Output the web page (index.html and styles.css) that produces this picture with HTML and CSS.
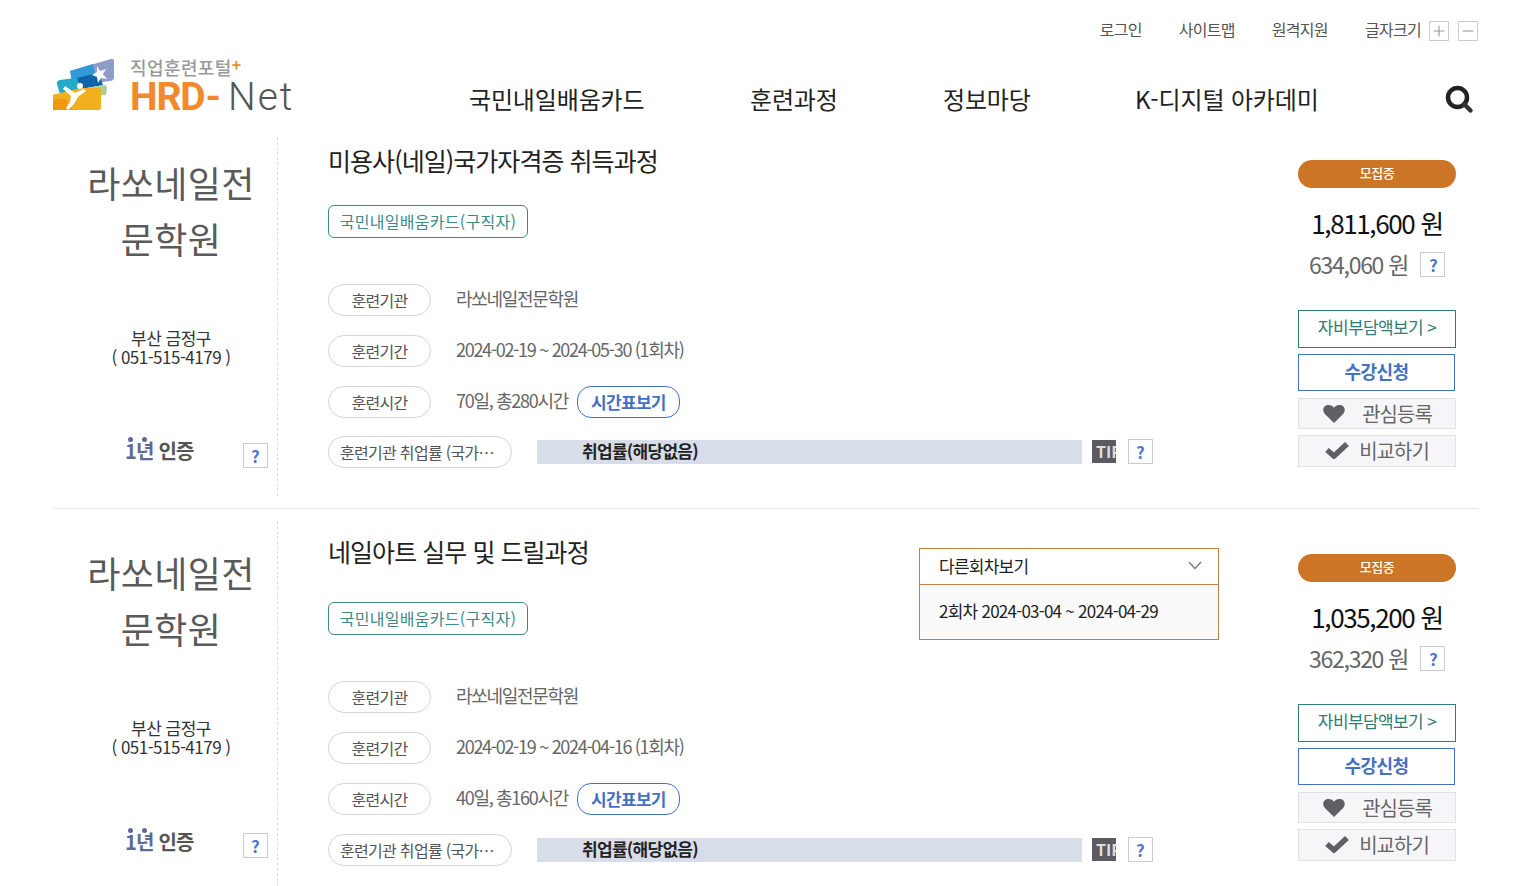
FILE: index.html
```html
<!DOCTYPE html>
<html lang="ko">
<head>
<meta charset="utf-8">
<title>HRD-Net</title>
<link rel="stylesheet" href="styles.css">
</head>
<body>
<div class="page">
  <header class="header">
    <nav class="util">
      <a>로그인</a><a>사이트맵</a><a>원격지원</a>
      <span class="fontsize">글자크기<svg class="sz" width="20" height="20" viewBox="0 0 20 20"><path d="M4 10 H16 M10 4 V16" stroke="#999" stroke-width="1.200" fill="none"/></svg><svg class="sz" width="20" height="20" viewBox="0 0 20 20"><path d="M4 10 H16" stroke="#999" stroke-width="1.200" fill="none"/></svg></span>
    </nav>
    <div class="mainbar">
      <div class="logo">
        <svg class="logo-mark" width="64" height="56" viewBox="0 0 64 56">
          <path d="M19 13 L60 1 Q63 0 63 4 L63 19 Q63 23 59 23 L22 28 Z" fill="#8f9bc9"/>
          <path d="M19 13 L42 6 L46 26 L22 28 Z" fill="#2f9ad6"/>
          <path d="M26 20 L47 15 L52 27 L30 31 Z" fill="#0f63ab"/>
          <path d="M6 26 Q5 23 9 22 L24 20 L32 31 L9 36 Z" fill="#24a9c9"/>
          <path d="M36 30 L53 27 Q56 27 56 30 L55 37 L38 38 Z" fill="#a9cf9e"/>
          <path d="M2 39 Q1 36 5 36 L30 30 L48 30 Q50 30 50 33 L50 50 Q50 52 48 52 L5 52 Q2 52 2 50 Z" fill="#f2b01e"/>
          <path d="M22 52 L2 52 L2 42 L14 40 Z" fill="#ef9a12"/>
          <path d="M46 8 L49 13 L55 11 L52 16 L56 21 L50 20 L47 25 L46 19 L41 17 L46 14 Z" fill="#fff"/>
          <path d="M14 28 L24 35 L33 31 L35 33 L27 39 L23 46 L17 52 L15 50 L19 44 L20 38 L12 31 Z" fill="#fff"/>
          <circle cx="29" cy="28" r="3" fill="#fff"/>
        </svg>
        <div class="logo-text">
          <div class="logo-sub">직업훈련포털<b>+</b></div>
          <div class="logo-name"><span class="hrd">HRD</span><span class="dash">-</span><span class="net">Net</span></div>
        </div>
      </div>
      <nav class="gnb">
        <a class="g1">국민내일배움카드</a><a class="g2">훈련과정</a><a class="g3">정보마당</a><a class="g4">K-디지털 아카데미</a>
      </nav>
      <svg class="search" width="30" height="30" viewBox="0 0 30 30">
        <circle cx="13.5" cy="13.5" r="9.5" fill="none" stroke="#222" stroke-width="4.500"/>
        <path d="M20 20 L26.5 26.5" stroke="#333" stroke-width="4.500" stroke-linecap="round"/>
      </svg>
    </div>
  </header>

  <section class="row row-a">
    <div class="col-left">
      <h2 class="org">라쏘네일전<br>문학원</h2>
      <p class="addr">부산 금정구<br>( 051-515-4179 )</p>
      <div class="cert"><span class="cert-txt"><em>1년</em> 인증</span><span class="q">?</span></div>
    </div>
    <div class="col-mid">
      <h3 class="title">미용사(네일)국가자격증 취득과정</h3>
      <div class="tag-line"><span class="tag">국민내일배움카드(구직자)</span></div>
      <ul class="info">
        <li><span class="pill">훈련기관</span><span class="val">라쏘네일전문학원</span></li>
        <li><span class="pill">훈련기간</span><span class="val">2024-02-19 ~ 2024-05-30 (1회차)</span></li>
        <li><span class="pill">훈련시간</span><span class="val">70일, 총280시간</span><span class="timebtn">시간표보기</span></li>
        <li class="rate-li"><span class="pill pill-wide">훈련기관 취업률 (국가…</span><span class="rate"><b>취업률(해당없음)</b></span><span class="tip">TIP</span><span class="q">?</span></li>
      </ul>
    </div>
    <div class="col-right">
      <div class="status">모집중</div>
      <div class="price">1,811,600 원</div>
      <div class="subprice"><span>634,060 원</span><span class="q">?</span></div>
      <a class="btn btn-green">자비부담액보기 &gt;</a>
      <a class="btn btn-blue">수강신청</a>
      <a class="btn btn-gray"><svg class="ico-h" width="24" height="20" viewBox="0 0 26 22"><path d="M13 21 L3 11 C-1 6 2 1 7 1 C10 1 12 2.500 13 4 C14 2.500 16 1 19 1 C24 1 27 6 23 11 Z" fill="#5f5f66"/></svg>관심등록</a>
      <a class="btn btn-gray btn-cmp"><svg class="ico-c" width="24" height="18" viewBox="0 0 24 18"><path d="M2 9 L9 15 L22 3" fill="none" stroke="#5f5f66" stroke-width="5.500"/></svg>비교하기</a>
    </div>
  </section>

  <div class="divider"></div>

  <section class="row row-b">
    <div class="col-left">
      <h2 class="org">라쏘네일전<br>문학원</h2>
      <p class="addr">부산 금정구<br>( 051-515-4179 )</p>
      <div class="cert"><span class="cert-txt"><em>1년</em> 인증</span><span class="q">?</span></div>
    </div>
    <div class="col-mid">
      <h3 class="title">네일아트 실무 및 드릴과정</h3>
      <div class="tag-line"><span class="tag">국민내일배움카드(구직자)</span></div>
      <ul class="info">
        <li><span class="pill">훈련기관</span><span class="val">라쏘네일전문학원</span></li>
        <li><span class="pill">훈련기간</span><span class="val">2024-02-19 ~ 2024-04-16 (1회차)</span></li>
        <li><span class="pill">훈련시간</span><span class="val">40일, 총160시간</span><span class="timebtn">시간표보기</span></li>
        <li class="rate-li"><span class="pill pill-wide">훈련기관 취업률 (국가…</span><span class="rate"><b>취업률(해당없음)</b></span><span class="tip">TIP</span><span class="q">?</span></li>
      </ul>
      <div class="dropdown">
        <div class="dd-head">다른회차보기<svg width="14" height="9" viewBox="0 0 14 9"><path d="M1 1 L7 7.500 L13 1" fill="none" stroke="#777" stroke-width="1.300"/></svg></div>
        <div class="dd-item">2회차 2024-03-04 ~ 2024-04-29</div>
      </div>
    </div>
    <div class="col-right">
      <div class="status">모집중</div>
      <div class="price">1,035,200 원</div>
      <div class="subprice"><span>362,320 원</span><span class="q">?</span></div>
      <a class="btn btn-green">자비부담액보기 &gt;</a>
      <a class="btn btn-blue">수강신청</a>
      <a class="btn btn-gray"><svg class="ico-h" width="24" height="20" viewBox="0 0 26 22"><path d="M13 21 L3 11 C-1 6 2 1 7 1 C10 1 12 2.500 13 4 C14 2.500 16 1 19 1 C24 1 27 6 23 11 Z" fill="#5f5f66"/></svg>관심등록</a>
      <a class="btn btn-gray btn-cmp"><svg class="ico-c" width="24" height="18" viewBox="0 0 24 18"><path d="M2 9 L9 15 L22 3" fill="none" stroke="#5f5f66" stroke-width="5.500"/></svg>비교하기</a>
    </div>
  </section>
</div>
</body>
</html>
```
FILE: styles.css
```css
* { box-sizing: border-box; }
html, body { margin: 0; padding: 0; background: #fff; }
body { height: 886px; overflow: hidden; font-family: "Noto Sans CJK KR", "Noto Sans", sans-serif; color: #222; }
ul { list-style: none; margin: 0; padding: 0; }
h2, h3, p { margin: 0; font-weight: 400; }
.page { width: 1425px; margin-left: 53px; }

.header { height: 137px; }
.util { height: 52px; display: flex; justify-content: flex-end; align-items: flex-start; padding-top: 18px; font-size: 16px; letter-spacing: -0.7px; color: #555; line-height: 22px; }
.util a { margin-right: 37px; }
.fontsize { display: flex; align-items: flex-start; }
.sz { flex: none; margin: 3px 0 0 8px; border: 1px solid #ccc; }
.sz + .sz { margin-left: 9px; }
.mainbar { display: flex; align-items: flex-start; position: relative; }
.logo { width: 416px; display: flex; align-items: flex-start; }
.logo-mark { margin: 6px 0 0 -2px; flex: none; }
.logo-text { margin-left: 15px; }
.logo-sub { font-size: 18px; line-height: 20px; font-weight: 500; color: #999; letter-spacing: 0.4px; margin-top: 2px; white-space: nowrap; }
.logo-sub b { color: #f08a24; vertical-align: 4px; font-size: 16px; }
.logo-name { font-family: Roboto, "Liberation Sans", sans-serif; font-size: 39px; line-height: 36px; margin-top: 2px; white-space: nowrap; display: flex; }
.hrd { color: #f08a2c; font-weight: 700; letter-spacing: -1.1px; }
.dash { color: #f08a2c; margin: 0 7px 0 1px; font-weight: 700; }
.net { color: #555; font-weight: 300; letter-spacing: 2px; }
.gnb { display: flex; font-size: 24px; line-height: 36px; letter-spacing: -0.15px; color: #222; padding-top: 29px; white-space: nowrap; }
.g1 { width: 281px; }
.g2 { width: 193px; }
.g3 { width: 192px; }
.search { position: absolute; left: 1391px; top: 32px; }

.row { display: flex; height: 359px; }
.col-left { width: 225px; border-right: 1px dashed #ddd; text-align: center; padding-left: 12px; position: relative; }
.org { font-size: 36px; line-height: 56px; color: #5a5a5a; padding-top: 17px; letter-spacing: 0.4px; font-weight: 400; }
.addr { font-size: 17px; line-height: 19px; color: #333; margin-top: 62px; letter-spacing: -0.5px; }
.cert { position: absolute; left: 0; right: 0; top: 296px; }
.cert-txt { position: absolute; left: 72px; top: 3px; font-size: 20px; line-height: 30px; font-weight: 700; color: #555; letter-spacing: -0.8px; }
.cert-txt em { font-style: normal; color: #5f6a94; }
.cert-txt::before { content: ""; position: absolute; left: 3px; top: 1px; width: 5px; height: 5px; border-radius: 50%; background: #5f6a94; box-shadow: 14px 0 0 #5f6a94; }
.cert .q { position: absolute; left: 190px; top: 10px; }
.q { display: inline-block; flex: none; width: 25px; height: 25px; border: 1px solid #ccc; color: #4d76cf; font-size: 17px; font-weight: 700; line-height: 23px; text-align: center; }

.col-mid { width: 994px; padding-left: 50px; position: relative; }
.title { font-size: 25px; line-height: 36px; color: #222; letter-spacing: -0.95px; padding-top: 5px; }
.tag-line { margin-top: 27px; }
.tag { display: inline-block; width: 200px; height: 33px; border: 1px solid #3d8a86; border-radius: 6px; color: #3d8a86; font-size: 16px; line-height: 30px; text-align: center; letter-spacing: 0.3px; white-space: nowrap; }
.info { margin-top: 45px; }
.info li { display: flex; align-items: center; height: 33px; margin-bottom: 18px; }
.info li.rate-li { margin-top: -1px; }
.pill { display: block; width: 103px; height: 32px; border: 1px solid #d5d5d5; border-radius: 16px; color: #555; font-size: 16px; line-height: 30px; text-align: center; letter-spacing: -0.7px; flex: none; }
.pill-wide { width: 184px; white-space: nowrap; text-align: left; padding-left: 11px; }
.val { margin-left: 25px; font-size: 18px; letter-spacing: -1.3px; color: #666; line-height: 30px; padding-bottom: 4px; }
.timebtn { margin-left: 9px; width: 103px; height: 32px; border: 1px solid #4470c4; border-radius: 14px; color: #4470c4; font-weight: 700; font-size: 17px; line-height: 29px; text-align: center; letter-spacing: -0.7px; }
.rate-li .rate { margin-left: 25px; width: 545px; height: 24px; background: #d8dee9; font-size: 17px; line-height: 22px; padding-left: 45px; letter-spacing: -0.7px; color: #222; }
.rate b { font-weight: 700; }
.tip { margin-left: 10px; width: 24px; height: 23px; background: #5a5a60; color: #ddd; font-size: 16px; font-weight: 700; line-height: 23px; overflow: hidden; padding-left: 4px; letter-spacing: 0; white-space: nowrap; }
.rate-li .q { margin-left: 12px; }

.dropdown { position: absolute; left: 641px; top: 27px; width: 300px; border: 1px solid #bd8244; font-size: 17px; letter-spacing: -0.75px; }
.dd-head { height: 36px; padding: 0 16px 2px 19px; border-bottom: 1px solid #bd8244; display: flex; justify-content: space-between; align-items: center; color: #222; background: #fff; }
.dd-item { height: 54px; padding-left: 19px; line-height: 52px; background: #fafafb; color: #222; }

.col-right { width: 206px; display: flex; flex-direction: column; padding-left: 26px; }
.status { width: 158px; height: 28px; background: #cc7526; color: #fff; border-radius: 14px; font-size: 13px; font-weight: 500; text-align: center; line-height: 26px; margin-top: 23px; letter-spacing: -0.5px; }
.price { width: 158px; text-align: center; font-size: 26px; line-height: 36px; color: #111; margin-top: 17px; letter-spacing: -1.4px; white-space: nowrap; }
.subprice { display: flex; align-items: center; width: 158px; font-size: 23px; line-height: 36px; color: #666; margin-top: 5px; padding-left: 11px; letter-spacing: -1.27px; white-space: nowrap; }
.subprice .q { margin-left: 12px; }
.btn { display: flex; align-items: center; justify-content: center; width: 158px; font-size: 18px; white-space: nowrap; }
.btn-green { height: 38px; border: 1px solid #2f7d78; color: #2f7d78; margin-top: 28px; padding-bottom: 5px; font-size: 17px; letter-spacing: -0.6px; }
.btn-blue { width: 157px; height: 37px; border: 1px solid #4470c4; color: #4470c4; font-weight: 700; margin-top: 6px; padding-bottom: 3px; letter-spacing: -0.5px; }
.btn-gray { height: 31px; background: #f6f6f8; border: 1px solid #e2e2e6; color: #666; font-size: 20px; margin-top: 7px; letter-spacing: -1px; }
.btn-cmp { height: 32px; margin-top: 6px; padding-bottom: 2px; }
.ico-h { margin-right: 16px; margin-top: 1px; }
.ico-c { margin-right: 10px; margin-top: 0; }

.divider { height: 1px; background: #e6e6e6; margin-top: 12px; }

.row-b { margin-top: 12px; height: 380px; }
.row-b .org { padding-top: 23px; }
.row-b .cert { top: 303px; }
.row-b .cert .q { top: 9px; }
.row-b .title { padding-top: 12px; }
.row-b .tag-line { margin-top: 33px; }
.row-b .info { margin-top: 45px; }
.row-b .info li.rate-li { margin-top: 0; }
.row-b .status { margin-top: 33px; }
```
